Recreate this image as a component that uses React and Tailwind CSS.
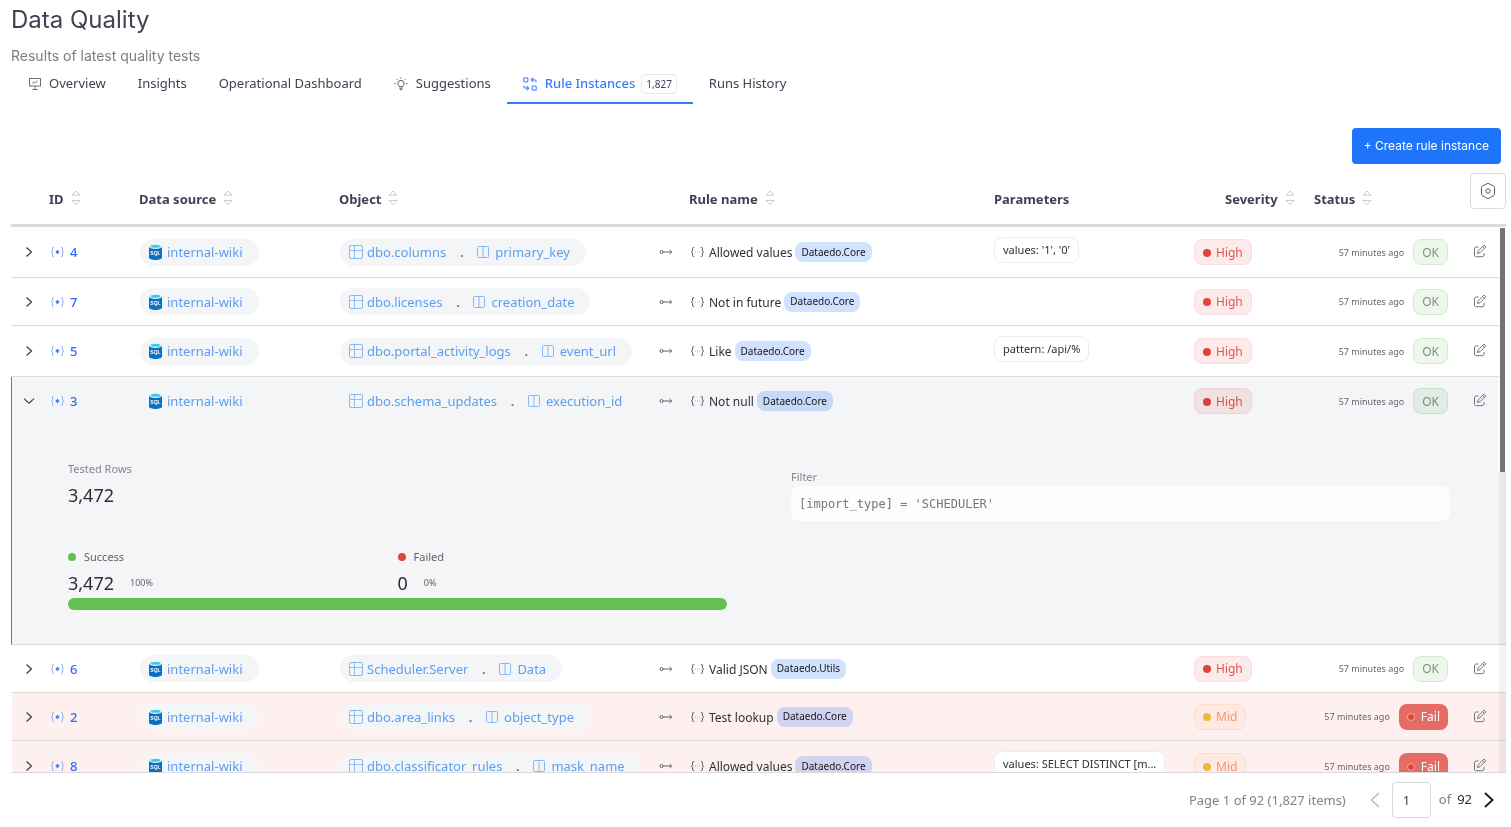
import { Fragment, useState } from "react";

const RULES = [
  { id: 4, table: "dbo.columns", column: "primary_key", rule: "Allowed values", lib: "Dataedo.Core", params: "values: '1', '0'", severity: "High", status: "OK" },
  { id: 7, table: "dbo.licenses", column: "creation_date", rule: "Not in future", lib: "Dataedo.Core", severity: "High", status: "OK" },
  { id: 5, table: "dbo.portal_activity_logs", column: "event_url", rule: "Like", lib: "Dataedo.Core", params: "pattern: /api/%", severity: "High", status: "OK" },
  { id: 3, table: "dbo.schema_updates", column: "execution_id", rule: "Not null", lib: "Dataedo.Core", severity: "High", status: "OK" },
  { id: 6, table: "Scheduler.Server", column: "Data", rule: "Valid JSON", lib: "Dataedo.Utils", severity: "High", status: "OK" },
  { id: 2, table: "dbo.area_links", column: "object_type", rule: "Test lookup", lib: "Dataedo.Core", severity: "Mid", status: "Fail" },
  { id: 8, table: "dbo.classificator_rules", column: "mask_name", rule: "Allowed values", lib: "Dataedo.Core", params: "values: SELECT DISTINCT [m...", severity: "Mid", status: "Fail" },
];

function MonitorIcon() {
  return (
    <svg width="12" height="12" viewBox="0 0 12 12" fill="none" stroke="#6b7080" aria-hidden="true">
      <rect x="0.5" y="0.5" width="11" height="7.5" />
      <path d="M6 8v3M3.5 11.5h5" />
      <path d="M3 5.5l1.7-1.6 1.3 1.2L8.8 2.8" strokeWidth="0.9" />
    </svg>
  );
}

function BulbIcon() {
  return (
    <svg width="14" height="14" viewBox="0 0 14 14" fill="none" stroke="#565b69" aria-hidden="true">
      <path d="M5.2 9.6V8.9C4.3 8.3 3.9 7.4 3.9 6.5a3.1 3.1 0 0 1 6.2 0c0 .9-.4 1.8-1.3 2.4v.7z" />
      <path d="M5.3 11.2h3.4M5.8 12.7h2.4" />
      <path d="M7 .4v1.4M2.4 1.9l1 1M11.6 1.9l-1 1M.4 6.5h1.5M12.1 6.5h1.5" strokeWidth="0.9" />
    </svg>
  );
}

function InstancesIcon() {
  return (
    <svg width="14" height="14" viewBox="0 0 14 14" fill="none" stroke="#5c93fb" strokeWidth="1.3" aria-hidden="true">
      <rect x="0.8" y="0.8" width="4" height="4" rx="0.8" />
      <rect x="9.2" y="9.2" width="4" height="4" rx="0.8" />
      <path d="M13 5.4V4.2a1.4 1.4 0 0 0-1.4-1.4H8.4M10.2.8l-2 2 2 2" />
      <path d="M1 8.6v1.2a1.4 1.4 0 0 0 1.4 1.4h3.2M3.8 9.2l2 2-2 2" />
    </svg>
  );
}

function SortIcon() {
  return (
    <svg width="10" height="16" viewBox="0 0 10 16" fill="none" stroke="#c9cbd1" strokeLinejoin="round" aria-hidden="true">
      <path d="M1 5.2L5 1l4 4.2z" />
      <path d="M1 10.5L5 14.7l4-4.2z" />
    </svg>
  );
}

function GearIcon() {
  return (
    <svg width="16" height="18" viewBox="0 0 16 18" fill="none" stroke="#5b6070" strokeLinejoin="round" aria-hidden="true">
      <path d="M8 1.2l5.2 2.6c.9.5 1.3 1 1.3 1.9v6.4c0 .9-.4 1.4-1.3 1.9L8 16.6 2.8 14c-.9-.5-1.3-1-1.3-1.9V5.7c0-.9.4-1.4 1.3-1.9z" />
      <circle cx="8" cy="9" r="2.2" />
    </svg>
  );
}

function ChevronIcon({ open }) {
  return open ? (
    <svg width="12" height="12" viewBox="0 0 12 12" fill="none" stroke="#3f4450" strokeWidth="1.2" aria-hidden="true">
      <path d="M1 3.6l5 4.7 5-4.7" />
    </svg>
  ) : (
    <svg width="12" height="12" viewBox="0 0 12 12" fill="none" stroke="#3f4450" strokeWidth="1.3" aria-hidden="true">
      <path d="M3.5 1.5L8.5 6l-5 4.5" />
    </svg>
  );
}

function InstanceIcon() {
  return (
    <svg width="13" height="12" viewBox="0 0 13 12" fill="none" stroke="#7fa9f8" aria-hidden="true">
      <path d="M3 1.5h-.5c-.7 0-1 .3-1 1v2L.6 6l.9 1.5v2c0 .7.3 1 1 1H3M10 1.5h.5c.7 0 1 .3 1 1v2l.9 1.5-.9 1.5v2c0 .7-.3 1-1 1H10" />
      <path d="M6.5 4v4M4.8 5l3.4 2M4.8 7l3.4-2" stroke="#3f7cf6" strokeWidth="1.1" />
    </svg>
  );
}

function BracesIcon() {
  return (
    <svg width="13" height="12" viewBox="0 0 13 12" fill="none" stroke="#4b4f5a" aria-hidden="true">
      <path d="M3.2 1.5h-.6c-.7 0-1 .3-1 1v2L.6 6l1 1.500v2c0 .7.3 1 1 1h.6M9.800 1.500h.6c.7 0 1 .3 1 1v2l1 1.500-1 1.500v2c0 .7-.3 1-1 1h-.6" />
      <path d="M4 6h1M6 6h1M8 6h1" stroke="#b4b7be" />
    </svg>
  );
}

function DatabaseIcon() {
  return (
    <svg width="13" height="16" viewBox="0 0 13 16" aria-hidden="true">
      <path d="M0 2.500v11C0 14.900 2.900 16 6.500 16S13 14.900 13 13.500v-11z" fill="#0a70c4" />
      <ellipse cx="6.500" cy="2.500" rx="6.500" ry="2.500" fill="#e4f4fa" />
      <ellipse cx="6.500" cy="2.300" rx="4.900" ry="1.500" fill="#3fcbe6" />
      <text x="6.500" y="10.500" textAnchor="middle" fontSize="5" fontWeight="700" fontFamily="Liberation Sans, sans-serif" fill="#fff">SQL</text>
    </svg>
  );
}

function TableIcon() {
  return (
    <svg width="14" height="14" viewBox="0 0 14 14" fill="none" stroke="#86b8f7" aria-hidden="true">
      <rect x="0.500" y="0.500" width="13" height="13" rx="1.500" />
      <path d="M5.500.500v13M.500 5.500h13" strokeWidth="0.900" />
    </svg>
  );
}

function ColumnIcon() {
  return (
    <svg width="12" height="12" viewBox="0 0 12 12" fill="none" stroke="#86b8f7" aria-hidden="true">
      <rect x="0.500" y="0.500" width="11" height="11" rx="1.200" />
      <path d="M6 .500v11" />
    </svg>
  );
}

function LinkIcon() {
  return (
    <svg width="14" height="8" viewBox="0 0 14 8" fill="none" stroke="#5f626b" aria-hidden="true">
      <circle cx="2.500" cy="4" r="1.500" />
      <path d="M4 4h8.500M10.600 2l2.200 2-2.200 2" />
    </svg>
  );
}

function EditIcon() {
  return (
    <svg width="14" height="14" viewBox="0 0 14 14" fill="none" stroke="#6f7380" strokeLinejoin="round" aria-hidden="true">
      <path d="M5.500 3H3.500c-1.400 0-2 .6-2 2v6c0 1.200.6 1.700 1.800 1.700h5.900c1.300 0 1.800-.6 1.800-1.700V9" />
      <path d="M11 1.100l1.800 1.800-5.800 5.800-2.600.8.800-2.600zM9.600 2.500l1.800 1.800" />
    </svg>
  );
}

const TABS = [
  { label: "Overview", icon: <MonitorIcon /> },
  { label: "Insights" },
  { label: "Operational Dashboard" },
  { label: "Suggestions", icon: <BulbIcon /> },
  { label: "Rule Instances", icon: <InstancesIcon />, count: "1,827" },
  { label: "Runs History" },
];

function Columns() {
  return (
    <colgroup>
      <col className="w-[38px]" />
      <col className="w-[90px]" />
      <col className="w-[200px]" />
      <col className="w-[320px]" />
      <col className="w-[30px]" />
      <col className="w-[305px]" />
      <col />
      <col className="w-[120px]" />
      <col className="w-[134px]" />
      <col className="w-[58px]" />
    </colgroup>
  );
}

function HeaderCell({ children, sortable, className = "" }) {
  return (
    <th scope="col" className={`p-0 pt-0.5 text-left font-bold ${className}`}>
      <span className="inline-flex items-center gap-[7px] whitespace-nowrap">
        {children}
        {sortable && (
          <button type="button" aria-label={`Sort by ${children}`} className="mb-1">
            <SortIcon />
          </button>
        )}
      </span>
    </th>
  );
}

function SeverityTag({ level }) {
  const tone = level === "High" ? "border-[#f9dcdc] bg-[#fdebeb] text-[#e0564e]" : "border-[#fdebd9] bg-[#fef9f2] text-[#f2a178]";
  const dot = level === "High" ? "bg-[#df453d]" : "bg-[#ecc445]";
  return (
    <span className={`inline-flex h-[26px] items-center gap-[5px] rounded-lg border px-2 pt-px text-xs mix-blend-multiply ${tone}`}>
      <span className={`size-2 rounded-full ${dot}`} />
      {level}
    </span>
  );
}

function StatusTag({ status }) {
  if (status === "OK") {
    return (
      <span className="inline-flex h-[26px] items-center rounded-lg border border-[#d2ebce] bg-[#edf7ec] px-2 pt-px text-xs text-[#839184] mix-blend-multiply">
        OK
      </span>
    );
  }
  return (
    <span className="inline-flex h-[26px] items-center gap-1.5 rounded-lg bg-[#e66b64] px-2 pt-px text-xs text-white">
      <span className="size-2 rounded-full border border-[#f3aaa6] bg-[#df453d]" />
      Fail
    </span>
  );
}

function RuleRow({ item, open, onToggle }) {
  const background = open ? "bg-[#f3f5f7]" : item.status === "Fail" ? "bg-[#fff0f0]" : "bg-white";
  const line = open ? "" : "border-b border-[#dadbdd]";
  const cell = `p-0 ${line}`;
  return (
    <tr className={`h-12 ${background}`}>
      <td className={`${cell} border-l pl-[11px] ${open ? "border-l-[#3b7cff]" : "border-l-white"}`}>
        <button type="button" aria-label={`Details of rule ${item.id}`} aria-expanded={open} onClick={onToggle} className="flex">
          <ChevronIcon open={open} />
        </button>
      </td>
      <td className={cell}>
        <a href={`#rule-${item.id}`} className="ml-0.5 flex items-center gap-1.5 font-medium text-[#2c6bfa]">
          <InstanceIcon />
          <span className="pt-0.5">{item.id}</span>
        </a>
      </td>
      <td className={`${cell} pl-px`}>
        <a href="#internal-wiki" className="flex h-[27px] w-fit items-center gap-[5px] rounded-full bg-[#f3f5f7] pr-4 pl-[9px] text-[#5c9ff0]">
          <DatabaseIcon />
          <span className="pt-0.5">internal-wiki</span>
        </a>
      </td>
      <td className={`${cell} pl-px`}>
        <span className="flex h-[27px] w-fit items-center rounded-full bg-[#f3f5f7] pr-4 pl-[9px] whitespace-nowrap text-[#5c9ff0]">
          <a href={`#${item.table}`} className="flex items-center gap-1">
            <TableIcon />
            <span className="pt-0.5">{item.table}</span>
          </a>
          <span className="w-[31px] pt-0.5 text-center font-bold text-[#777b84]">.</span>
          <a href={`#${item.column}`} className="flex items-center gap-1.5">
            <ColumnIcon />
            <span className="pt-0.5">{item.column}</span>
          </a>
        </span>
      </td>
      <td className={cell}>
        <LinkIcon />
      </td>
      <td className={cell}>
        <span className="ml-0.5 flex items-center gap-[5px] text-xs whitespace-nowrap text-[#2d3039]">
          <BracesIcon />
          <span className="flex items-center gap-[3px]">
            <span className="pt-0.5">{item.rule}</span>
            <span className="flex h-5 items-center rounded-lg bg-[#d1e2ff] px-1.5 pt-px text-[10px] text-[#15171c] mix-blend-multiply">{item.lib}</span>
          </span>
        </span>
      </td>
      <td className={`${cell} ${item.params ? "pt-2.5 pb-3.5" : ""}`}>
        {item.params && (
          <span className="flex h-[26px] w-fit items-center rounded-lg border border-[#ededef] bg-white px-2 pt-px text-[11px] whitespace-nowrap text-[#2d3039]">
            {item.params}
          </span>
        )}
      </td>
      <td className={cell}>
        <div className="flex">
          <SeverityTag level={item.severity} />
        </div>
      </td>
      <td className={cell}>
        <div className="flex items-center justify-end gap-[9px] text-[9px] whitespace-nowrap text-[#63666f]">
          <span className="pt-px">57 minutes ago</span>
          <StatusTag status={item.status} />
        </div>
      </td>
      <td className={`${cell} pl-[25px]`}>
        <button type="button" aria-label={`Edit rule ${item.id}`} className="mb-0.5 flex">
          <EditIcon />
        </button>
      </td>
    </tr>
  );
}

function Stat({ dot, label, value, percent }) {
  return (
    <div>
      <div className="flex h-4 items-center gap-2 text-[11px] text-[#5f636c]">
        <span className={`size-2 rounded-full ${dot}`} />
        {label}
      </div>
      <div className="mt-1.5 flex h-6 items-center gap-4 text-lg text-[#2b2e35]">
        {value}
        <span className="text-[9px] text-[#63666f]">{percent}</span>
      </div>
    </div>
  );
}

function DetailRow() {
  return (
    <tr className="bg-[#f3f5f7]">
      <td colSpan={10} className="border-b border-l border-[#dadbdd] border-l-[#3b7cff] px-14 pt-9 pb-[34px] align-top">
        <div className="grid grid-cols-2 gap-16">
          <div>
            <div className="flex h-4 items-center text-[11px] text-[#83868e]">Tested Rows</div>
            <div className="mt-1.5 mb-[42px] flex h-6 items-center text-lg text-[#2b2e35]">3,472</div>
            <div className="grid grid-cols-2">
              <Stat dot="bg-[#66bf52]" label="Success" value="3,472" percent="100%" />
              <Stat dot="bg-[#df453d]" label="Failed" value="0" percent="0%" />
            </div>
            <div className="mt-[3px] h-3 rounded-full bg-[#66bf52]" />
          </div>
          <div className="pt-2">
            <div className="flex h-4 items-center text-[11px] text-[#83868e]">Filter</div>
            <code className="mt-px flex h-[35px] items-center rounded-lg bg-[#fdfdfe] px-2 font-['DejaVu_Sans_Mono',monospace] text-xs text-[#777]">
              [import_type] = 'SCHEDULER'
            </code>
          </div>
        </div>
      </td>
    </tr>
  );
}

export default function App() {
  const [openId, setOpenId] = useState(3);
  return (
    <main className="flex h-screen flex-col bg-white pr-[5px] pl-[11px] font-['Noto_Sans',sans-serif] text-[13px] text-[#3f4254]">
      <h1 className="mt-1.5 font-['Inter',sans-serif] text-2xl leading-7">Data Quality</h1>
      <p className="mt-3.5 font-['Inter',sans-serif] text-sm leading-4 text-[#7a7d85]">Results of latest quality tests</p>

      <nav className="flex h-10 shrink-0 pl-0.5">
        {TABS.map((tab) => {
          const active = tab.label === "Rule Instances";
          return (
            <a
              key={tab.label}
              href={`#${tab.label.replace(" ", "-")}`}
              className={`flex items-center gap-2 border-b-2 px-4 pt-0.5 whitespace-nowrap ${active ? "border-[#3a7bfd] font-medium text-[#3a7bfd]" : "border-transparent"}`}
            >
              {tab.icon}
              <span className="flex items-center gap-1.5">
                {tab.label}
                {tab.count && (
                  <span className="flex h-5 items-center rounded-sm border border-[#e6e7ea] px-1 text-[10px] font-normal text-[#3f4254]">{tab.count}</span>
                )}
              </span>
            </a>
          );
        })}
      </nav>

      <div className="mt-6 flex justify-end pr-[5px]">
        <button type="button" className="h-9 rounded-sm bg-[#1f75f9] px-3 font-['Inter',sans-serif] text-xs text-white">
          + Create rule instance
        </button>
      </div>

      <div className="mt-[9px] border-b-[3px] border-[#dadbdd]">
        <table className="w-full table-fixed border-separate border-spacing-0">
          <Columns />
          <thead>
            <tr className="h-[51px]">
              <td className="p-0" />
              <HeaderCell sortable>ID</HeaderCell>
              <HeaderCell sortable>Data source</HeaderCell>
              <HeaderCell sortable>Object</HeaderCell>
              <td className="p-0" />
              <HeaderCell sortable>Rule name</HeaderCell>
              <HeaderCell>Parameters</HeaderCell>
              <HeaderCell sortable className="pl-[31px]">Severity</HeaderCell>
              <HeaderCell sortable>Status</HeaderCell>
              <td className="p-0 align-top">
                <button type="button" aria-label="Table settings" className="ml-auto flex size-9 items-center justify-center rounded-sm border border-[#d9dade]">
                  <GearIcon />
                </button>
              </td>
            </tr>
          </thead>
        </table>
      </div>

      <div className="relative min-h-0 flex-1 border-b border-[#dadbdd]">
        <div className="h-full overflow-y-auto [scrollbar-width:none]">
          <table className="w-full table-fixed border-separate border-spacing-0">
            <Columns />
            <tbody>
              {RULES.map((item) => (
                <Fragment key={item.id}>
                  <RuleRow item={item} open={openId === item.id} onToggle={() => setOpenId(openId === item.id ? null : item.id)} />
                  {openId === item.id && <DetailRow />}
                </Fragment>
              ))}
            </tbody>
          </table>
        </div>
        <div className="pointer-events-none absolute inset-y-0 right-0 w-[7px] bg-black/5">
          <div className="h-[45%] border-x border-t border-white bg-[#747474]" />
        </div>
      </div>

      <footer className="flex h-[54px] shrink-0 items-center justify-end pr-3">
        <span className="mr-6 pt-0.5 text-[#7f828a]">Page 1 of 92 (1,827 items)</span>
        <button type="button" aria-label="Previous page" className="mr-3">
          <svg width="10" height="16" viewBox="0 0 10 16" fill="none" stroke="#bcbec4" strokeWidth="1.600" aria-hidden="true">
            <path d="M9 1L1.500 8 9 15" />
          </svg>
        </button>
        <input aria-label="Page number" defaultValue="1" className="mr-2 h-9 w-[39px] rounded-sm border border-[#d9dade] px-2.5 text-[#3f4254]" />
        <span className="mr-1.5 text-[#7f828a]">of</span>
        <span className="mr-3 text-[#2b2e35]">92</span>
        <button type="button" aria-label="Next page">
          <svg width="10" height="16" viewBox="0 0 10 16" fill="none" stroke="#1f2127" strokeWidth="2" aria-hidden="true">
            <path d="M1 1l7.500 7L1 15" />
          </svg>
        </button>
      </footer>
    </main>
  );
}
